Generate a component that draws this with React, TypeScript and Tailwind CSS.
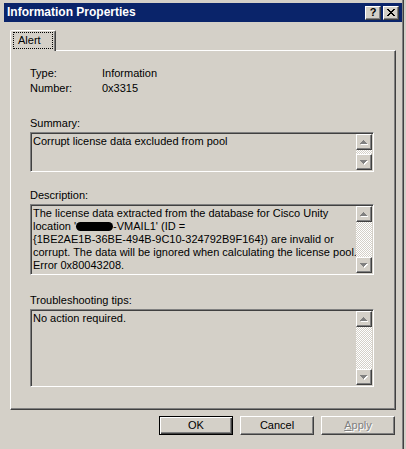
import React from 'react';

// classic 3D edges
const sunken =
  'border border-t-[#808080] border-l-[#808080] border-r-white border-b-white shadow-[inset_1px_1px_0_#404040,inset_-1px_-1px_0_#d4d0c8]';
const raised =
  'border border-t-white border-l-white border-r-[#404040] border-b-[#404040] shadow-[inset_-1px_-1px_0_#808080]';

function Triangle({ up }: { up: boolean }) {
  const d = up
    ? 'M3 0h1v1h-1z M2 1h3v1h-3z M1 2h5v1h-5z M0 3h7v1h-7z'
    : 'M0 0h7v1h-7z M1 1h5v1h-5z M2 2h3v1h-3z M3 3h1v1h-1z';
  return (
    <svg width="8" height="5" viewBox="0 0 8 5" shapeRendering="crispEdges">
      <path d={d} fill="#ffffff" transform="translate(1 1)" />
      <path d={d} fill="#808080" />
    </svg>
  );
}

function ArrowButton({ up }: { up: boolean }) {
  return (
    <div className={`${raised} w-[16px] h-[16px] bg-[#d4d0c8] flex items-center justify-center shrink-0`}>
      <Triangle up={up} />
    </div>
  );
}

function TextBox({ className, children }: { className: string; children: React.ReactNode }) {
  return (
    <div className={`${sunken} ${className} w-[344px] flex bg-[#d4d0c8]`}>
      <div className="flex-1 pl-[2px] pt-[2px] whitespace-nowrap overflow-hidden">{children}</div>
      <div className="w-[16px] flex flex-col mt-[1px] mb-[1px] mr-[1px]">
        <ArrowButton up={true} />
        <div className="flex-1 bg-[image:repeating-conic-gradient(#ffffff_0_25%,#d4d0c8_0_50%)] bg-[length:2px_2px]" />
        <ArrowButton up={false} />
      </div>
    </div>
  );
}

export default function App() {
  return (
    <div className="w-[406px] h-[449px] overflow-hidden bg-[#d4d0c8] font-['Liberation_Sans',Arial,sans-serif] text-[11px] leading-[13px] text-black">
      <div className="w-[404px] h-[449px] border-r border-r-[#404040] shadow-[inset_-1px_0_0_#808080] pt-[3px]">
        {/* title bar */}
        <div className="ml-[4px] w-[398px] h-[19px] bg-[#0a246a] flex items-center pl-[3px] pr-[3px]">
          <span className="font-bold text-white text-[12px]">Information Properties</span>
          <div className="ml-auto flex gap-[2px]">
            <div className={`${raised} w-[16px] h-[14px] bg-[#d4d0c8] flex items-center justify-center font-bold text-[11px] leading-none`}>
              ?
            </div>
            <div className={`${raised} w-[16px] h-[14px] bg-[#d4d0c8] flex items-center justify-center`}>
              <svg width="8" height="7" viewBox="0 0 8 7" shapeRendering="crispEdges">
                <path
                  d="M0 0h2v1h-2z M6 0h2v1h-2z M1 1h2v1h-2z M5 1h2v1h-2z M2 2h4v1h-4z M3 3h2v1h-2z M2 4h4v1h-4z M1 5h2v1h-2z M5 5h2v1h-2z M0 6h2v1h-2z M6 6h2v1h-2z"
                  fill="#000"
                />
              </svg>
            </div>
          </div>
        </div>

        {/* tab */}
        <div className="ml-[10px] mt-[8px]">
          <div className="relative z-10 -mb-[1px] w-[46px] h-[21px] bg-[#d4d0c8] border-t border-l border-r border-t-white border-l-white border-r-[#404040] shadow-[inset_-1px_0_0_#808080] rounded-t-[2px] pt-[1px] pl-[2px]">
            <div className="w-[40px] h-[17px] border border-dotted border-black pl-[4px] pt-[1px]">Alert</div>
          </div>

          {/* panel */}
          <div className="w-[386px] h-[360px] border border-t-white border-l-white border-r-[#404040] border-b-[#404040] shadow-[inset_-1px_-1px_0_#808080] pl-[19px] pt-[16px] flex flex-col">
            <div className="flex">
              <span className="w-[72px]">Type:</span>
              <span>Information</span>
            </div>
            <div className="flex mt-[2px]">
              <span className="w-[72px]">Number:</span>
              <span>0x3315</span>
            </div>

            <div className="mt-[22px]">Summary:</div>
            <TextBox className="mt-[2px] h-[40px]">Corrupt license data excluded from pool</TextBox>

            <div className="mt-[17px]">Description:</div>
            <TextBox className="mt-[2px] h-[71px]">
              <div>The license data extracted from the database for Cisco Unity</div>
              <div>
                location '<span className="inline-block w-[37px] h-[9px] rounded-full bg-black align-[-1px]" />-VMAIL1' (ID =
              </div>
              <div>{'{1BE2AE1B-36BE-494B-9C10-324792B9F164})'} are invalid or</div>
              <div>corrupt. The data will be ignored when calculating the license pool.</div>
              <div>Error 0x80043208.</div>
            </TextBox>

            <div className="mt-[19px]">Troubleshooting tips:</div>
            <TextBox className="mt-[2px] h-[78px]">No action required.</TextBox>
          </div>
        </div>

        {/* buttons */}
        <div className="flex gap-[7px] pl-[159px] mt-[6px]">
          <div className="w-[74px] h-[19px] border border-black shadow-[inset_1px_1px_0_#ffffff,inset_-1px_-1px_0_#404040,inset_-2px_-2px_0_#808080] flex items-center justify-center">
            OK
          </div>
          <div className={`${raised} w-[74px] h-[19px] flex items-center justify-center`}>Cancel</div>
          <div className={`${raised} w-[74px] h-[19px] flex items-center justify-center text-[#808080] [text-shadow:1px_1px_0_#ffffff]`}>
            <span className="underline">A</span>pply
          </div>
        </div>
      </div>
    </div>
  );
}
